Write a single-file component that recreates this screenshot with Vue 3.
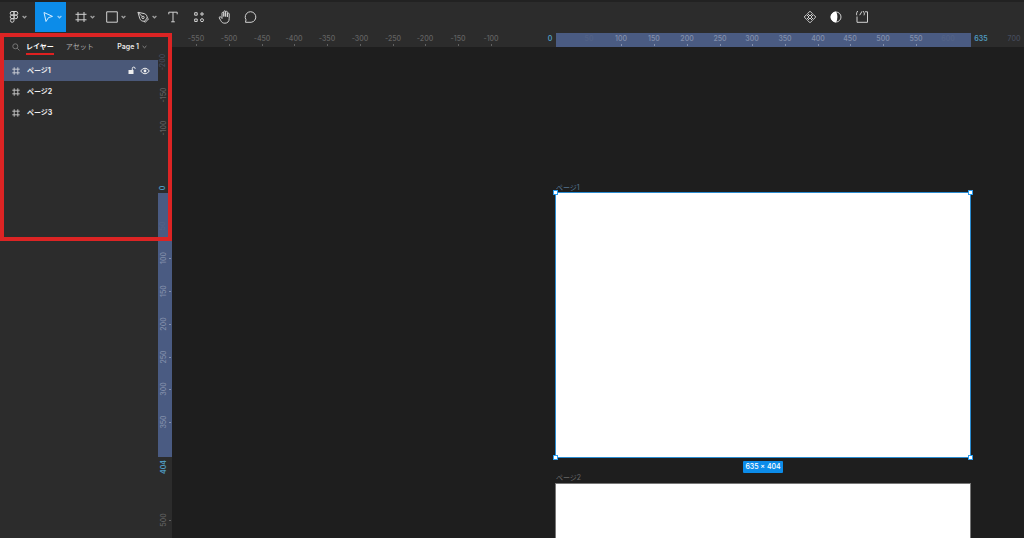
<script setup>
import { ref } from 'vue'

const origin = { x: 556, y: 193 }
const unit = 0.654
const rulerStart = { x: 172, y: 33 }

const xPos = (v) => Math.round(origin.x - rulerStart.x + v * unit)
const yPos = (v) => Math.round(origin.y - rulerStart.y + v * unit)

const range = (from, to) => {
  const out = []
  for (let v = from; v <= to; v += 50) out.push(v)
  return out
}

const xMarks = [...range(-550, -100), ...range(50, 600), 700].map((v) => ({
  v,
  pos: xPos(v),
  tone: v === 50 || v >= 600 ? 'faint' : v > 0 ? 'inside' : 'outside',
}))
const yMarks = [...range(-200, -100), ...range(50, 350), 500].map((v) => ({
  v,
  pos: yPos(v),
  tone: v === 50 || v === -200 ? 'faint' : v > 0 && v < 404 ? 'inside' : 'outside',
}))

const pages = ['ページ1', 'ページ2', 'ページ3']
const selected = ref(0)
</script>

<template>
  <div class="app">
    <header class="toolbar">
      <button class="tool menu" aria-label="Main menu">
        <svg width="10" height="14" viewBox="0 0 10 14"><path d="M5 1.500H3a1.800 1.800 0 0 0 0 3.600h2zM5 1.500h2a1.800 1.800 0 0 1 0 3.600H5zM5 5.100H3a1.800 1.800 0 0 0 0 3.600h2zM5 8.700H3a1.800 1.800 0 1 0 2 1.800z" /><circle cx="6.800" cy="6.900" r="1.800" /></svg>
        <svg class="chev" width="5" height="4" viewBox="0 0 5 4"><path d="M.6 1l1.900 1.800L4.400 1" /></svg>
      </button>
      <button class="tool wide active" aria-label="Move">
        <svg width="12" height="14" viewBox="0 0 12 14"><path d="M2 2.500l8.500 3.900-4 1.200L4 11.500z" /></svg>
        <svg class="chev" width="5" height="4" viewBox="0 0 5 4"><path d="M.6 1l1.900 1.800L4.400 1" /></svg>
      </button>
      <button class="tool wide" aria-label="Frame">
        <svg width="12" height="14" viewBox="0 0 12 14"><path d="M3 2v10M9 2v10M.5 4.300h11M.5 9.800h11" /></svg>
        <svg class="chev" width="5" height="4" viewBox="0 0 5 4"><path d="M.6 1l1.900 1.800L4.400 1" /></svg>
      </button>
      <button class="tool wide" aria-label="Rectangle">
        <svg width="12" height="14" viewBox="0 0 12 14"><path d="M.7 1.800h10.600v10.400H.7z" /></svg>
        <svg class="chev" width="5" height="4" viewBox="0 0 5 4"><path d="M.6 1l1.900 1.800L4.400 1" /></svg>
      </button>
      <button class="tool wide" aria-label="Pen">
        <svg width="12" height="14" viewBox="0 0 12 14"><path d="M1 2.300l6.200 1.300c2 .5 3 2.300 3 4.400l-2.700 3.300C5 11.300 3.300 10.400 2.700 8.300zM1 2.300l4.200 4.300M10.200 7.600l1.300 1.300-3.200 3.400-1.300-1.100" /><circle cx="6" cy="7.400" r="1.200" /></svg>
        <svg class="chev" width="5" height="4" viewBox="0 0 5 4"><path d="M.6 1l1.900 1.800L4.400 1" /></svg>
      </button>
      <button class="tool text-tool" aria-label="Text">
        <svg width="12" height="14" viewBox="0 0 12 14"><path d="M1.800 4.300V2.200h8.400v2.100M6 2.200v9.600M4.200 11.800h3.600" /></svg>
      </button>
      <button class="tool" aria-label="Resources">
        <svg width="12" height="14" viewBox="0 0 12 14"><path d="M1.700 2.700h2.500v2.500H1.700zM1.700 9h2.500v2.500H1.700zM9 2v4M7 4h4" /><circle cx="9" cy="10.200" r="1.500" /></svg>
      </button>
      <button class="tool" aria-label="Hand">
        <svg width="14" height="14" viewBox="0 0 14 14"><path d="M4 8.500V3.300q0-1 .9-1t.9 1v3.200-4.700q0-1 .9-1t.9 1v4.700-4.200q0-1 .9-1t.9 1v4.700-3q0-.9.900-.9t.9.900v4.500c0 3-1.600 4.700-4.300 4.700-2.200 0-3.400-1-4.200-2.700L1.300 8q-.3-1 .5-1.200T3 7.300l1 1.200" /></svg>
      </button>
      <button class="tool" aria-label="Comment">
        <svg width="14" height="14" viewBox="0 0 14 14"><path d="M1.500 12.300l.5-2.500A5.300 5.300 0 1 1 7.100 12.300z" /></svg>
      </button>
      <div class="component-tools">
        <button class="tool" aria-label="Create component">
          <svg width="14" height="14" viewBox="0 0 14 14"><path d="M7 1.200l2.400 2.400L7 6 4.600 3.600zM7 8l2.400 2.400L7 12.800l-2.400-2.400zM3.600 4.600L6 7 3.600 9.400 1.200 7zM10.400 4.600L12.800 7l-2.400 2.400L8 7z" /></svg>
        </button>
        <button class="tool" aria-label="Use as mask">
          <svg width="14" height="14" viewBox="0 0 14 14"><circle cx="7" cy="7" r="5" /><path class="solid white" d="M7 1.600a5.400 5.400 0 0 0 0 10.800q1.400-2.200 1.400-5.400T7 1.600z" /></svg>
        </button>
        <button class="tool" aria-label="Crop">
          <svg width="14" height="14" viewBox="0 0 14 14"><path d="M2 6.500v5.800h10.500V1.800H10M3 1.300q-1.200 0-1.200 1.400T1 4q.8 0 .8 1.300M7 1.300L4.700 5.200M8 1.300q1 0 1 1.300t.8 1.200Q9 4 9 5.300" /></svg>
        </button>
      </div>
    </header>

    <div class="workspace">
      <aside class="sidebar">
        <nav class="tabs">
          <button class="search" aria-label="Search">
            <svg width="8" height="8" viewBox="0 0 8 8"><circle cx="3.300" cy="3.300" r="2.500" /><path d="M5.200 5.200l2.300 2.300" /></svg>
          </button>
          <button class="tab current">レイヤー</button>
          <button class="tab">アセット</button>
          <button class="page-menu">Page 1
            <svg class="chev" width="5" height="4" viewBox="0 0 5 4"><path d="M.6 1l1.900 1.800L4.400 1" /></svg>
          </button>
        </nav>
        <ul class="layers">
          <li v-for="(page, i) in pages" :key="page" :class="{ selected: selected === i }">
            <button class="layer" @click="selected = i">
              <svg width="8" height="8" viewBox="0 0 8 8"><path d="M2.200.3v7.400M5.800.3v7.400M.3 2.200h7.400M.3 5.800h7.400" /></svg>
              <span>{{ page }}</span>
            </button>
            <template v-if="selected === i">
              <button class="state" aria-label="Lock">
                <svg width="8" height="9" viewBox="0 0 8 9"><path class="solid" d="M.5 4h5v4h-5z" /><path d="M4.300 4V2.500a1.400 1.400 0 0 1 2.800 0V3" /></svg>
              </button>
              <button class="state" aria-label="Hide">
                <svg width="10" height="8" viewBox="0 0 10 8"><path d="M.7 4Q2.500 1.200 5 1.200T9.300 4Q7.500 6.800 5 6.800T.7 4z" /><circle class="solid" cx="5" cy="4" r="1.400" /></svg>
              </button>
            </template>
          </li>
        </ul>
      </aside>

      <div class="ruler vertical">
        <div class="band" :style="{ top: yPos(0) + 'px', height: yPos(404) - yPos(0) + 'px' }"></div>
        <span v-for="m in yMarks" :key="m.v" class="mark" :class="m.tone" :style="{ top: m.pos + 'px' }"><span class="num">{{ m.v }}</span></span>
        <span class="mark edge" :style="{ top: yPos(-8) + 'px' }"><span class="num">0</span></span>
        <span class="mark edge" :style="{ top: yPos(419) + 'px' }"><span class="num">404</span></span>
      </div>

      <main class="stage">
        <div class="ruler horizontal">
          <div class="band" :style="{ left: xPos(0) + 'px', width: xPos(635) - xPos(0) + 'px' }"></div>
          <span v-for="m in xMarks" :key="m.v" class="mark" :class="m.tone" :style="{ left: m.pos + 'px' }">{{ m.v }}</span>
          <span class="mark edge" :style="{ left: xPos(-9) + 'px' }">0</span>
          <span class="mark edge" :style="{ left: xPos(650) + 'px' }">635</span>
        </div>
        <section class="frame first">
          <span class="frame-name">ページ1</span>
          <i class="handle nw"></i><i class="handle ne"></i><i class="handle sw"></i><i class="handle se"></i>
          <span class="size">635 × 404</span>
        </section>
        <section class="frame second">
          <span class="frame-name">ページ2</span>
        </section>
      </main>

      <div class="highlight"></div>
    </div>
  </div>
</template>

<style>
body {
  background: #1e1e1e;
}
</style>

<style scoped>
.app {
  display: flex;
  flex-direction: column;
  height: 100vh;
  overflow: hidden;
  background: #1e1e1e;
  color: #e8e8e8;
  font: 7px/10px Inter, "Noto Sans CJK JP", sans-serif;
}
button {
  display: flex;
  align-items: center;
  padding: 0;
  border: 0;
  background: none;
  color: inherit;
  font: inherit;
}
svg {
  flex: none;
  fill: none;
  stroke: currentColor;
  stroke-width: 1;
}
.solid {
  fill: currentColor;
  stroke: none;
}
.white {
  fill: #fff;
}
.toolbar {
  display: flex;
  flex: none;
  height: 30px;
  padding-bottom: 1px;
  border-top: 2px solid #222;
  background: #2c2c2c;
  color: #d2d2d2;
}
.tool {
  justify-content: center;
  width: 26px;
}
.tool .chev {
  margin-left: 3px;
  stroke-width: 1.2;
  opacity: .7;
}
.menu {
  width: 35px;
}
.wide {
  width: 31px;
}
.active {
  box-sizing: border-box;
  margin-right: 3px;
  padding-left: 3px;
  background: #0c8ce9;
  color: #d4ecff;
}
.text-tool {
  width: 22px;
  margin-right: 2px;
}
.component-tools {
  display: flex;
  margin: 0 149px 0 auto;
}
.workspace {
  position: relative;
  display: flex;
  flex: 1;
  min-height: 0;
}
.sidebar {
  width: 158px;
  flex: none;
  background: #2c2c2c;
}
.tabs {
  display: flex;
  align-items: center;
  height: 27px;
  padding: 0 11px 0 12px;
  color: #b0b0b0;
}
.search {
  margin-right: 6px;
  color: #777;
}
.tab {
  height: 13px;
  margin-right: 12px;
  padding-top: 2px;
  border-bottom: 2px solid transparent;
  box-sizing: content-box;
}
.current {
  border-color: #e02020;
  color: #fff;
  font-weight: 700;
}
.page-menu {
  gap: 3px;
  margin-left: auto;
  color: #e8e8e8;
  font-weight: 600;
}
.page-menu svg {
  opacity: .5;
}
.layers {
  margin: 0;
  padding: 0;
  list-style: none;
}
.layers li {
  display: flex;
  align-items: center;
  gap: 4px;
  height: 21px;
  padding: 0 8px 0 12px;
  color: #eee;
}
.layers .selected {
  background: #4a5878;
}
.layer {
  flex: 1;
  gap: 7px;
  height: 100%;
  font-weight: 700;
}
.layer svg {
  opacity: .75;
}
.ruler {
  position: relative;
  flex: none;
  overflow: hidden;
  background: #2c2c2c;
  font-weight: 500;
}
.vertical {
  width: 14px;
}
.horizontal {
  height: 14px;
}
.band {
  position: absolute;
  background: #4a5b82;
}
.vertical .band {
  left: 0;
  right: 0;
}
.horizontal .band {
  top: 0;
  bottom: 0;
}
.mark {
  position: absolute;
  display: flex;
  align-items: center;
  justify-content: center;
  width: 24px;
  color: #626262;
}
.horizontal .mark {
  top: 0;
  height: 14px;
  margin-left: -12px;
  padding-bottom: 2px;
  box-sizing: border-box;
}
.vertical .mark {
  left: 0;
  width: 11px;
  height: 24px;
  margin-top: -12px;
}
.num {
  transform: rotate(-90deg);
}
.mark::after {
  content: "";
  position: absolute;
  background: currentColor;
}
.horizontal .mark::after {
  bottom: 1px;
  left: 12px;
  width: 1px;
  height: 2px;
}
.vertical .mark::after {
  top: 12px;
  left: 11px;
  width: 2px;
  height: 1px;
}
.mark.inside {
  color: #8490ac;
}
.mark.faint {
  color: #5d6b8b;
  opacity: .5;
}
.mark.edge {
  color: #4f9ac0;
  font-weight: 600;
}
.mark.edge::after,
.mark.faint::after {
  display: none;
}
.stage {
  position: relative;
  flex: 1;
  min-width: 0;
  overflow: hidden;
}
.frame {
  position: absolute;
  left: 383px;
  width: 416px;
  box-sizing: border-box;
  border: 1px solid #777;
  background: #fff;
}
.first {
  top: 159px;
  height: 266px;
  border: 1px solid #2b8cd0;
}
.second {
  top: 450px;
  height: 266px;
}
.frame-name {
  position: absolute;
  left: 0;
  top: -11px;
  color: #686868;
}
.first .frame-name {
  top: -10px;
  color: #557590;
}
.handle {
  position: absolute;
  width: 3px;
  height: 3px;
  border: 1px solid #2b9cec;
  background: #fff;
}
.nw, .ne { top: -3px; }
.sw, .se { bottom: -3px; }
.nw, .sw { left: -3px; }
.ne, .se { right: -3px; }
.size {
  position: absolute;
  top: 268px;
  left: 50%;
  width: 40px;
  margin-left: -20px;
  border-radius: 1px;
  background: #0c8ce9;
  color: #fff;
  font-weight: 500;
  line-height: 12px;
  text-align: center;
  white-space: nowrap;
}
.highlight {
  position: absolute;
  top: 0;
  left: 0;
  width: 172px;
  height: 208px;
  box-sizing: border-box;
  border: 4px solid #dc2424;
  pointer-events: none;
}
</style>
